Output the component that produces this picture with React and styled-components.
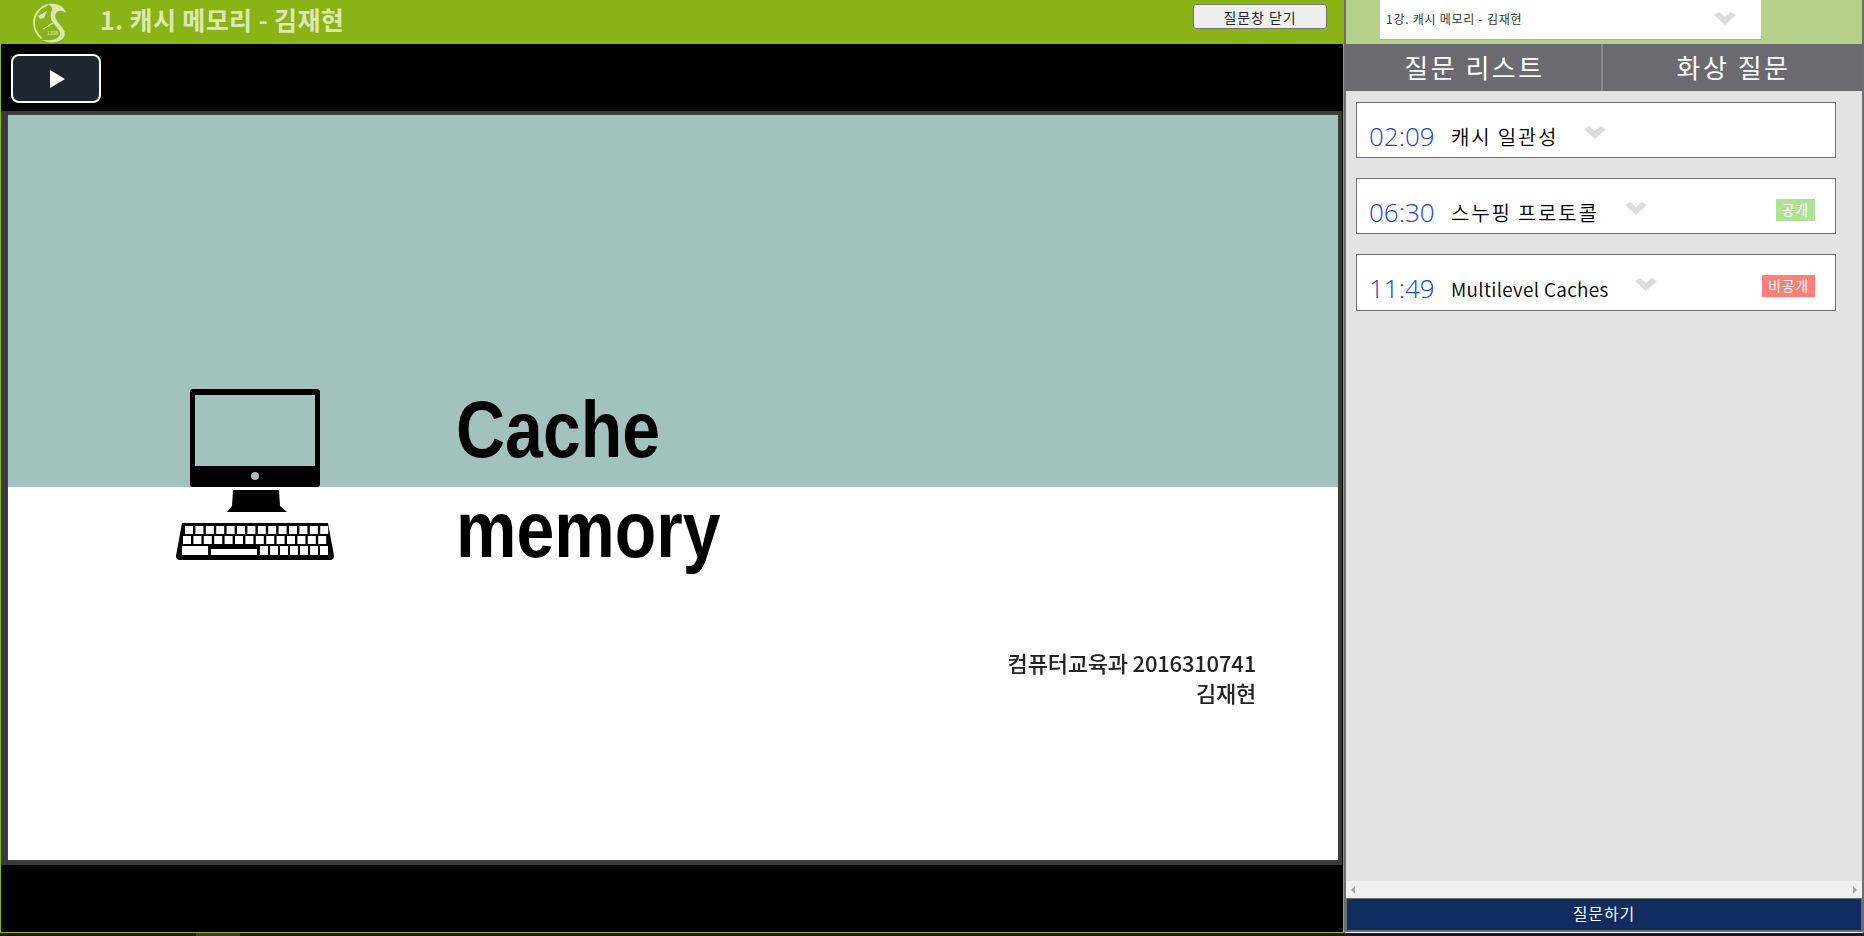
import React from 'react';
import styled, { createGlobalStyle } from 'styled-components';

const KR = `"Noto Sans CJK KR", "Noto Sans", sans-serif`;

const GlobalStyle = createGlobalStyle`
    html, body {
        margin: 0;
        padding: 0;
        background: #1a1a1a;
        overflow: hidden;
    }
    * { box-sizing: border-box; }
`;

const questions = [
    { time: '02:09', title: '캐시 일관성' },
    { time: '06:30', title: '스누핑 프로토콜', badge: '공개', open: true },
    { time: '11:49', title: 'Multilevel Caches', badge: '비공개', latin: true },
];

const Logo = () => (
    <LogoSvg viewBox="0 0 34 40" width="34" height="40">
        <path d="M14 2 C6 5 1 12 1 20 C1 26 3 30 8 35" fill="none" stroke="#dbe8b8" strokeWidth="1.8" strokeLinecap="round" />
        <path d="M15 1 C24 0 31 3 33 10 C29 7 25 7 23 10 C21 14 23 17 27 22 C31 26 33 30 31 34 C27 40 16 41 9 37 C16 38 25 37 27 32 C28 28 24 25 21 21 C17 16 17 11 19 7 C20 5 18 3 15 1 Z" fill="#dbe8b8" />
        <path d="M5 13 L14 8 L11 15 L7 16 Z" fill="#dbe8b8" />
        <path d="M10 26 C14 24 17 22 20 20" fill="none" stroke="#dbe8b8" strokeWidth="1.2" />
        <text x="14" y="32" fontSize="5" fill="#dbe8b8" fontFamily="Liberation Sans, sans-serif">1398</text>
    </LogoSvg>
);

const Chevron = () => (
    <ChevronSvg viewBox="0 0 22 13" width="22" height="13">
        <path d="M0 3 L5 0 L11 5 L17 0 L22 3 L11 13 Z" fill="#dcdcdc" />
    </ChevronSvg>
);

const keyRows = [
    [0, 1, 2, 3, 4, 5, 6, 7, 8, 9, 10, 11, 12, 13],
    [0, 1, 2, 3, 4, 5, 6, 7, 8, 9, 10, 11, 12, 13],
];

const Computer = () => (
    <svg viewBox="0 0 160 172" width="160" height="172">
        <rect x="15" y="1" width="130" height="98" rx="3" fill="#000" />
        <rect x="20" y="7" width="120" height="71" fill="#a2c2be" />
        <circle cx="80" cy="88" r="4" fill="#b5b5b5" />
        <path d="M58 102 L104 102 L105 118 L112 124 L52 124 L57 118 Z" fill="#000" />
        <path d="M7 135 L153 135 L159 168 Q159 172 155 172 L5 172 Q1 172 1 168 Z" fill="#000" />
        {keyRows.map((row, r) =>
            row.map(k => (
                <rect key={`${r}-${k}`} x={10 + r * -2 + k * 10.4} y={138 + r * 10} width="8" height="8" fill="#fff" />
            ))
        )}
        <rect x="7" y="158" width="26" height="9" fill="#fff" />
        <rect x="36" y="161" width="46" height="6" fill="#fff" />
        {[85, 95, 105, 115, 125, 135, 145].map(x => (
            <rect key={x} x={x} y="158" width="8" height="9" fill="#fff" />
        ))}
    </svg>
);

export default function App() {
    return (
        <Page>
            <GlobalStyle />
            <Columns>
                <Main>
                    <Header>
                        <Logo />
                        <Title>1. 캐시 메모리 - 김재현</Title>
                        <CloseButton>질문창 닫기</CloseButton>
                    </Header>
                    <Player>
                        <Controls>
                            <PlayButton>
                                <svg viewBox="0 0 15 18" width="15" height="18">
                                    <path d="M0 0 L15 9 L0 18 Z" fill="#fff" />
                                </svg>
                            </PlayButton>
                        </Controls>
                        <SlideFrame>
                            <Slide>
                                <Hero>
                                    <Computer />
                                    <Headline>
                                        <HeadWord>Cache</HeadWord>
                                        <HeadWord>memory</HeadWord>
                                    </Headline>
                                </Hero>
                                <Credit>
                                    <div>컴퓨터교육과 2016310741</div>
                                    <div>김재현</div>
                                </Credit>
                            </Slide>
                        </SlideFrame>
                    </Player>
                </Main>
                <Side>
                    <SelectBand>
                        <Select>
                            <SelectText>1강. 캐시 메모리 - 김재현</SelectText>
                            <Chevron />
                        </Select>
                    </SelectBand>
                    <Tabs>
                        <Tab>질문 리스트</Tab>
                        <Tab>화상 질문</Tab>
                    </Tabs>
                    <List>
                        {questions.map(q => (
                            <Card key={q.time}>
                                <Time>{q.time}</Time>
                                <CardTitle $latin={q.latin}>{q.title}</CardTitle>
                                <CardChevron><Chevron /></CardChevron>
                                {q.badge && <Badge $open={q.open}>{q.badge}</Badge>}
                            </Card>
                        ))}
                    </List>
                    <ScrollBar>
                        <Arrow $dir="left" />
                        <Arrow $dir="right" />
                    </ScrollBar>
                    <AskButton>질문하기</AskButton>
                </Side>
            </Columns>
            <Taskbar><TaskItem /></Taskbar>
        </Page>
    );
}

const Page = styled.div`
    width: 1864px;
    height: 936px;
    display: flex;
    flex-direction: column;
    font-family: ${KR};
    background: #1a1a1a;
    overflow: hidden;
`;

const Columns = styled.div`
    display: flex;
    height: 933px;
`;

const Main = styled.div`
    width: 1344px;
    display: flex;
    flex-direction: column;
    border-left: 1px solid #8ab415;
    border-right: 1px solid #8ab415;
    border-bottom: 1px solid #8ab415;
`;

const Header = styled.header`
    height: 44px;
    flex: none;
    margin-left: -1px;
    background: #8ab415;
    display: flex;
    align-items: center;
    padding: 0 16px 0 33px;
`;

const LogoSvg = styled.svg`
    flex: none;
    margin-top: 2px;
`;

const Title = styled.h1`
    margin: -6px 0 0 33px;
    flex: 1;
    font-size: 25px;
    line-height: 38px;
    height: 38px;
    font-weight: 700;
    color: #dbe8b8;
    letter-spacing: 0.35px;
`;

const CloseButton = styled.button`
    width: 134px;
    height: 25px;
    margin-top: -11px;
    padding: 0;
    background: #efefef;
    border: 1px solid #767676;
    border-radius: 3px;
    color: #222;
    font-family: ${KR};
    font-size: 14px;
    letter-spacing: 0.9px;
    line-height: 20px;
`;

const Player = styled.div`
    flex: 1;
    display: flex;
    flex-direction: column;
    background: #000;
`;

const Controls = styled.div`
    height: 67px;
    flex: none;
    padding: 10px 0 0 10px;
`;

const PlayButton = styled.button`
    width: 90px;
    height: 49px;
    padding: 0 0 0 3px;
    background: #1e2630;
    border: 2px solid #fff;
    border-radius: 8px;
    display: flex;
    align-items: center;
    justify-content: center;
`;

const SlideFrame = styled.div`
    width: 1341px;
    height: 754px;
    padding: 4px 4px 5px 7px;
    background: #3a3a3a;
`;

const Slide = styled.div`
    height: 100%;
    background: linear-gradient(#a2c2be 0, #a2c2be 372px, #fff 372px);
    box-shadow: 0 0 2px #555;
    padding: 273px 0 0 167px;
    display: flex;
    flex-direction: column;
`;

const Hero = styled.div`
    display: flex;
    gap: 121px;
    filter: blur(0.6px);
`;

const Headline = styled.div`
    display: flex;
    flex-direction: column;
    margin-top: -8px;
`;

const HeadWord = styled.div`
    height: 100px;
    line-height: 100px;
    font-family: "Liberation Sans", Arial, sans-serif;
    font-size: 80px;
    font-weight: 700;
    color: #000;
    transform: scaleX(0.85);
    transform-origin: left center;
`;

const Credit = styled.div`
    margin-top: 67px;
    padding-right: 82px;
    text-align: right;
    font-size: 22px;
    line-height: 30px;
    font-weight: 500;
    color: #222;
    letter-spacing: -0.2px;
    filter: blur(0.6px);
`;

const Side = styled.aside`
    flex: 1;
    display: flex;
    flex-direction: column;
    background: #e3e3e3;
    border-left: 2px solid #6e6e6e;
    border-right: 2px solid #6e6e6e;
    border-bottom: 1px solid #fff;
`;

const SelectBand = styled.div`
    height: 44px;
    flex: none;
    background: #b7d08a;
    padding-left: 34px;
`;

const Select = styled.div`
    width: 381px;
    height: 40px;
    background: #fff;
    border-bottom: 1px solid #a8b898;
    display: flex;
    align-items: center;
    justify-content: space-between;
    padding: 0 25px 2px 6px;
`;

const SelectText = styled.span`
    font-size: 12px;
    color: #333;
    letter-spacing: 0.75px;
`;

const ChevronSvg = styled.svg`
    display: block;
    flex: none;
`;

const Tabs = styled.div`
    height: 47px;
    flex: none;
    display: flex;
    background: #6a6a70;
`;

const Tab = styled.div`
    flex: 1;
    padding-left: 2px;
    text-align: center;
    color: #fff;
    font-size: 26px;
    line-height: 46px;
    letter-spacing: 2.5px;
    & + & {
        border-left: 2px solid #8c8c90;
    }
    &:first-child {
        flex: none;
        width: 255px;
    }
`;

const List = styled.div`
    flex: 1;
    display: flex;
    flex-direction: column;
    gap: 20px;
    padding: 11px 26px 0 10px;
`;

const Card = styled.div`
    height: 56px;
    background: #fff;
    border: 1px solid #6e6e6e;
    display: flex;
    align-items: center;
    padding: 11px 0 0 12px;
    position: relative;
    &:last-child {
        height: 57px;
    }
`;

const Time = styled.span`
    font-family: "Open Sans", sans-serif;
    font-size: 26px;
    font-weight: 300;
    line-height: 36px;
    color: #1d43cc;
    width: 82px;
    letter-spacing: 0;
`;

const CardTitle = styled.span`
    font-size: ${p => (p.$latin ? '19px' : '20px')};
    font-weight: 350;
    line-height: 30px;
    padding-top: 2px;
    color: #000;
    letter-spacing: ${p => (p.$latin ? '0.3px' : '1.8px')};
`;

const CardChevron = styled.span`
    margin: -7px 0 0 26px;
`;

const Badge = styled.span`
    position: absolute;
    right: 20px;
    top: 20px;
    height: 22px;
    padding: 0 6px;
    font-size: 14px;
    letter-spacing: 0.8px;
    line-height: 21px;
    color: #fff;
    background: ${p => (p.$open ? '#aee394' : '#ff8078')};
`;

const ScrollBar = styled.div`
    height: 17px;
    flex: none;
    background: #f0f0f0;
    display: flex;
    align-items: center;
    justify-content: space-between;
    padding: 0 5px;
`;

const Arrow = styled.span`
    width: 0;
    height: 0;
    border-top: 4px solid transparent;
    border-bottom: 4px solid transparent;
    ${p => (p.$dir === 'left' ? 'border-right: 4px solid #a8a8a8;' : 'border-left: 4px solid #a8a8a8;')}
`;

const AskButton = styled.button`
    height: 34px;
    flex: none;
    padding: 0 0 3px 0;
    background: #102c60;
    border: 1px solid #6e6e6e;
    border-bottom-width: 2px;
    color: #fff;
    font-family: ${KR};
    font-size: 16px;
    letter-spacing: 0.9px;
    line-height: 26px;
`;

const Taskbar = styled.div`
    height: 3px;
    flex: none;
    background: #1a1a1a;
    padding-left: 196px;
`;

const TaskItem = styled.div`
    width: 44px;
    height: 3px;
    background: #3c3c3c;
`;
